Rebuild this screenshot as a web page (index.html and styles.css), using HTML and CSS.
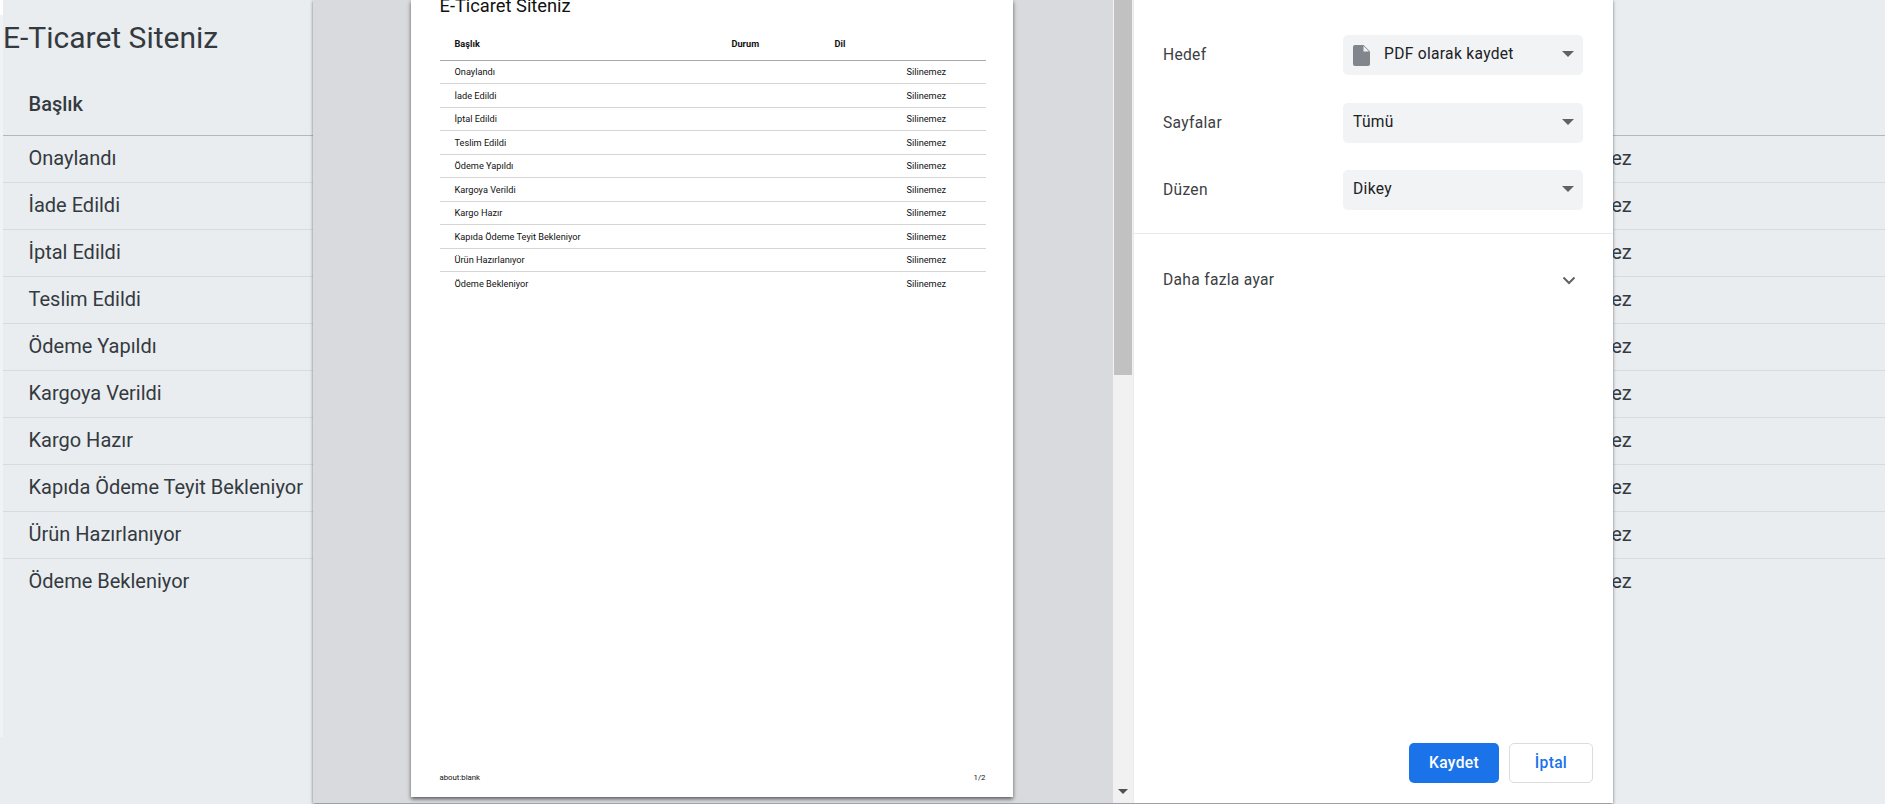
FILE: index.html
```html
<!DOCTYPE html>
<html lang="tr">
<head>
  <meta charset="UTF-8" />
  <title>E-Ticaret Siteniz</title>
  <link rel="stylesheet" href="styles.css">
</head>
<body>
  <div class="edge"></div>

  <!-- Page behind the print dialog -->
  <main class="site">
    <h1>E-Ticaret Siteniz</h1>
    <table class="site-table">
      <thead>
        <tr><th class="col-title">Başlık</th><th class="col-status">Durum</th><th class="col-lang">Dil</th><th class="col-action"></th></tr>
      </thead>
      <tbody>
        <tr><td>Onaylandı</td><td></td><td></td><td>Silinemez</td></tr>
        <tr><td>İade Edildi</td><td></td><td></td><td>Silinemez</td></tr>
        <tr><td>İptal Edildi</td><td></td><td></td><td>Silinemez</td></tr>
        <tr><td>Teslim Edildi</td><td></td><td></td><td>Silinemez</td></tr>
        <tr><td>Ödeme Yapıldı</td><td></td><td></td><td>Silinemez</td></tr>
        <tr><td>Kargoya Verildi</td><td></td><td></td><td>Silinemez</td></tr>
        <tr><td>Kargo Hazır</td><td></td><td></td><td>Silinemez</td></tr>
        <tr><td>Kapıda Ödeme Teyit Bekleniyor</td><td></td><td></td><td>Silinemez</td></tr>
        <tr><td>Ürün Hazırlanıyor</td><td></td><td></td><td>Silinemez</td></tr>
        <tr><td>Ödeme Bekleniyor</td><td></td><td></td><td>Silinemez</td></tr>
      </tbody>
    </table>
  </main>

  <!-- Print dialog -->
  <div class="print-dialog">
    <div class="preview">
      <div class="sheet">
        <div class="sheet-title">E-Ticaret Siteniz</div>
        <table class="sheet-table">
          <thead>
            <tr><th class="sheet-col-title">Başlık</th><th class="sheet-col-status">Durum</th><th class="sheet-col-lang">Dil</th><th></th></tr>
          </thead>
          <tbody>
            <tr><td>Onaylandı</td><td></td><td></td><td>Silinemez</td></tr>
            <tr><td>İade Edildi</td><td></td><td></td><td>Silinemez</td></tr>
            <tr><td>İptal Edildi</td><td></td><td></td><td>Silinemez</td></tr>
            <tr><td>Teslim Edildi</td><td></td><td></td><td>Silinemez</td></tr>
            <tr><td>Ödeme Yapıldı</td><td></td><td></td><td>Silinemez</td></tr>
            <tr><td>Kargoya Verildi</td><td></td><td></td><td>Silinemez</td></tr>
            <tr><td>Kargo Hazır</td><td></td><td></td><td>Silinemez</td></tr>
            <tr><td>Kapıda Ödeme Teyit Bekleniyor</td><td></td><td></td><td>Silinemez</td></tr>
            <tr><td>Ürün Hazırlanıyor</td><td></td><td></td><td>Silinemez</td></tr>
            <tr><td>Ödeme Bekleniyor</td><td></td><td></td><td>Silinemez</td></tr>
          </tbody>
        </table>
        <div class="sheet-footer">
          <span>about:blank</span>
          <span>1/2</span>
        </div>
      </div>
    </div>

    <div class="scrollbar">
      <div class="scroll-thumb"></div>
      <div class="scroll-arrow"></div>
    </div>

    <aside class="sidebar">
      <div class="settings">
        <div class="setting">
          <span class="setting-label">Hedef</span>
          <div class="select">
            <svg class="file-icon" width="17" height="21" viewBox="0 0 17 21">
              <path d="M2 0H10.5L17 6.5V19a2 2 0 0 1-2 2H2a2 2 0 0 1-2-2V2a2 2 0 0 1 2-2Z" fill="#80868b"/>
              <path d="M10.5 1V6.5H16Z" fill="#f1f3f4"/>
            </svg>
            <span>PDF olarak kaydet</span>
            <span class="select-arrow"></span>
          </div>
        </div>
        <div class="setting">
          <span class="setting-label">Sayfalar</span>
          <div class="select"><span>Tümü</span><span class="select-arrow"></span></div>
        </div>
        <div class="setting">
          <span class="setting-label">Düzen</span>
          <div class="select"><span>Dikey</span><span class="select-arrow"></span></div>
        </div>
      </div>

      <div class="more-settings">
        <span>Daha fazla ayar</span>
        <svg width="14" height="9" viewBox="0 0 14 9">
          <path d="M1.5 1.5L7 7L12.5 1.5" fill="none" stroke="#5f6368" stroke-width="2"/>
        </svg>
      </div>

      <div class="actions">
        <button class="btn btn-primary">Kaydet</button>
        <button class="btn btn-cancel">İptal</button>
      </div>
    </aside>
  </div>
</body>
</html>
```

FILE: styles.css
```css
html, body {
  height: 804px;
  margin: 0;
  overflow: hidden;
}
body {
  display: flex;
  position: relative;
  font-family: Roboto, sans-serif;
  background: #e9edf0;
  color: #343a40;
}
.edge {
  flex: 0 0 3px;
  background: linear-gradient(#fff 15px, #f0f2f6 15px, #f0f2f6 737px, #e9edf0 737px);
}

/* background page */
.site {
  flex: 1;
  min-width: 0;
}
h1 {
  margin: 19px 0 16px;
  font-size: 30px;
  font-weight: 400;
  line-height: 38px;
}
.site-table {
  width: 100%;
  table-layout: fixed;
  border-collapse: collapse;
  font-size: 20px;
}
.site-table th, .site-table td {
  box-sizing: border-box;
  padding: 0 0 0 25.5px;
  text-align: left;
}
.site-table th {
  height: 62px;
  font-weight: 500;
  border-bottom: 1px solid #b4b8bb;
}
.site-table td {
  height: 47px;
  padding-bottom: 1px;
  border-bottom: 1px solid #d8dbdd;
}
.site-table tr:last-child td {
  border-bottom: none;
}
.col-title { width: 760px; }
.col-status { width: 400px; }
.col-action { width: 365px; }

/* print dialog */
.print-dialog {
  position: absolute;
  top: 0;
  left: 313px;
  width: 1300px;
  height: 803px;
  display: flex;
  background: #fff;
  box-shadow: 0 1px 3px rgba(60, 64, 67, 0.7);
}
.preview {
  flex: 1;
  display: flex;
  justify-content: center;
  align-items: flex-end;
  padding: 0 3px 6px 0;
  overflow: hidden;
  background: #d8dade;
}
.sheet {
  width: 602px;
  height: 797px;
  box-sizing: border-box;
  display: flex;
  flex-direction: column;
  padding: 0 27px 0 29px;
  background: #fff;
  color: #111;
  box-shadow: 0 2px 4px rgba(0, 0, 0, 0.6);
}
.sheet-title {
  margin-top: -6px;
  padding-bottom: 10px;
  font-size: 18.3px;
  line-height: 23px;
}
.sheet-table {
  width: 100%;
  table-layout: fixed;
  border-collapse: collapse;
  font-size: 9.2px;
}
.sheet-table th, .sheet-table td {
  box-sizing: border-box;
  padding: 0 0 0 15px;
  text-align: left;
}
.sheet-table th {
  height: 33px;
  font-weight: 700;
  border-bottom: 1px solid #a9a9a9;
}
.sheet-table td {
  height: 23.5px;
  border-bottom: 1px solid #d5d5d5;
}
.sheet-table tr:last-child td {
  border-bottom: none;
}
.sheet-col-title { width: 277px; }
.sheet-col-status { width: 103px; }
.sheet-col-lang { width: 72px; }
.sheet-footer {
  margin-top: auto;
  padding: 0 0 13px;
  display: flex;
  justify-content: space-between;
  font-size: 7.8px;
  line-height: 12px;
}

.scrollbar {
  flex: 0 0 20px;
  display: flex;
  flex-direction: column;
  justify-content: space-between;
  align-items: center;
  background: #f1f1f1;
}
.scroll-thumb {
  width: 18px;
  height: 375px;
  background: #c1c1c1;
}
.scroll-arrow {
  width: 0;
  height: 0;
  margin-bottom: 9px;
  border-left: 5px solid transparent;
  border-right: 5px solid transparent;
  border-top: 5px solid #505050;
}

.sidebar {
  flex: 0 0 480px;
  box-sizing: border-box;
  display: flex;
  flex-direction: column;
  border-left: 1px solid #e8eaed;
  background: #fff;
  color: #3c4043;
  font-size: 15.6px;
  letter-spacing: 0.3px;
}
.settings {
  padding: 35px 30px 23px 29px;
  display: flex;
  flex-direction: column;
  gap: 27.5px;
  border-bottom: 1px solid #e8eaed;
}
.setting {
  display: flex;
  align-items: center;
  justify-content: space-between;
}
.select {
  width: 240px;
  height: 40px;
  box-sizing: border-box;
  display: flex;
  align-items: center;
  gap: 14px;
  padding: 0 9px 2px 10px;
  border-radius: 5px;
  background: #f1f3f4;
  color: #202124;
}
.file-icon {
  flex: none;
  margin-top: 2px;
}
.select-arrow {
  width: 0;
  height: 0;
  margin-left: auto;
  border-left: 6.5px solid transparent;
  border-right: 6.5px solid transparent;
  border-top: 6.5px solid #5f6368;
}
.more-settings {
  display: flex;
  align-items: center;
  justify-content: space-between;
  padding: 37px 37px 36px 29px;
  line-height: 18px;
}
.actions {
  margin-top: auto;
  padding: 0 20px 20px 0;
  display: flex;
  justify-content: flex-end;
  gap: 10px;
}
.btn {
  height: 40px;
  border-radius: 5px;
  font-family: Roboto, sans-serif;
  font-size: 15.6px;
  font-weight: 500;
  letter-spacing: 0.3px;
}
.btn-primary {
  width: 90px;
  border: none;
  background: #1a73e8;
  color: #fff;
}
.btn-cancel {
  width: 84px;
  border: 1px solid #dadce0;
  background: #fff;
  color: #1a73e8;
}
```
